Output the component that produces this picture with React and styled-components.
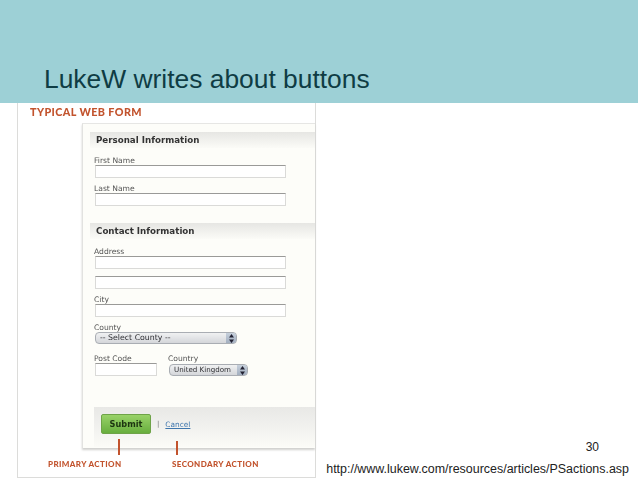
import styled, { createGlobalStyle } from "styled-components";

const GlobalStyle = createGlobalStyle`
  html, body {
    margin: 0;
    padding: 0;
    background: #fff;
  }
`;

function Field({ label, children }) {
  return (
    <div>
      <FieldLabel>{label}</FieldLabel>
      {children}
    </div>
  );
}

function Select({ width, top, textSize, children }) {
  return (
    <SelectBox $width={width} $top={top}>
      <SelectText $size={textSize}>{children}</SelectText>
      <SelectArrows>
        <svg width="5" height="9" viewBox="0 0 5 9">
          <path d="M2.5 0 L5 3.4 L0 3.4 Z M2.5 9 L5 5.6 L0 5.6 Z" fill="#223" />
        </svg>
      </SelectArrows>
    </SelectBox>
  );
}

function App() {
  return (
    <Slide>
      <GlobalStyle />
      <Banner>
        <Title>LukeW writes about buttons</Title>
      </Banner>
      <Body>
        <Figure>
          <FigureTitle>TYPICAL WEB FORM</FigureTitle>
          <Card>
            <SectionHead>Personal Information</SectionHead>
            <Fields $pad={6}>
              <Field label="First Name">
                <Input />
              </Field>
              <Field label="Last Name">
                <Input />
              </Field>
            </Fields>
            <SectionHead $top={17}>Contact Information</SectionHead>
            <Fields $pad={6}>
              <Field label="Address">
                <Input />
                <Input $top={7} />
              </Field>
              <Field label="City">
                <Input />
              </Field>
              <Field label="County">
                <Select width={142} textSize={7.8}>
                  -- Select County --
                </Select>
              </Field>
              <PostRow>
                <Field label="Post Code">
                  <Input $width={62} />
                </Field>
                <Field label="Country">
                  <Select width={79} top={1} textSize={7.1}>
                    United Kingdom
                  </Select>
                </Field>
              </PostRow>
            </Fields>
            <Actions>
              <Submit>Submit</Submit>
              <Divider>|</Divider>
              <Cancel>Cancel</Cancel>
            </Actions>
          </Card>
          <Pointer $left={100} $top={336} $height={16} />
          <Pointer $left={158} $top={338} $height={14} />
          <ActionLabels>
            <ActionLabel $width={124}>PRIMARY ACTION</ActionLabel>
            <ActionLabel>SECONDARY ACTION</ActionLabel>
          </ActionLabels>
        </Figure>
        <Notes>
          <PageNumber>30</PageNumber>
          <Url>http://www.lukew.com/resources/articles/PSactions.asp</Url>
        </Notes>
      </Body>
    </Slide>
  );
}

const Slide = styled.div`
  width: 638px;
  height: 479px;
  overflow: hidden;
  background: #fff;
`;

const Banner = styled.div`
  height: 103px;
  box-sizing: border-box;
  padding: 65px 0 0 44px;
  background: #9dd0d6;
`;

const Title = styled.div`
  font-family: "Liberation Sans", Arial, sans-serif;
  font-size: 26.4px;
  line-height: 28px;
  color: #0f3c44;
`;

const Body = styled.div`
  display: flex;
  height: 376px;
`;

const Figure = styled.div`
  position: relative;
  box-sizing: border-box;
  width: 299px;
  height: 375px;
  margin-left: 17px;
  border: 1px solid #dcdcda;
  border-top: none;
  background: #fff;
  filter: blur(0.35px);
`;

const FigureTitle = styled.div`
  height: 20px;
  padding-left: 12px;
  font-family: Lato, "Liberation Sans", sans-serif;
  font-size: 10.8px;
  font-weight: 900;
  line-height: 18px;
  letter-spacing: 0.4px;
  color: #c2532d;
`;

const Card = styled.div`
  box-sizing: border-box;
  height: 325px;
  margin-left: 64px;
  padding: 8px 0 0 7px;
  border-top: 1px solid #e6e6e4;
  border-left: 1px solid #e2e2e0;
  background: #fdfdf9;
  box-shadow: 0 2px 2px #d0d0ce;
`;

const SectionHead = styled.div`
  box-sizing: border-box;
  height: 16px;
  margin-top: ${(p) => p.$top || 0}px;
  padding-left: 6px;
  font-family: "DejaVu Sans", sans-serif;
  font-size: 8.7px;
  font-weight: 700;
  line-height: 16px;
  color: #333;
  background: linear-gradient(#e6e6e3, #fbfbf7);
`;

const Fields = styled.div`
  display: flex;
  flex-direction: column;
  gap: 4px;
  padding: ${(p) => p.$pad}px 0 0 4px;
`;

const FieldLabel = styled.div`
  height: 11px;
  font-family: "DejaVu Sans", sans-serif;
  font-size: 7.6px;
  line-height: 13px;
  color: #555;
`;

const Input = styled.div`
  box-sizing: border-box;
  width: ${(p) => p.$width || 191}px;
  height: 13px;
  margin-top: ${(p) => p.$top || 0}px;
  margin-left: 1px;
  border: 1px solid #dadad8;
  border-top-color: #9a9a98;
  background: #fff;
`;

const SelectBox = styled.div`
  box-sizing: border-box;
  display: flex;
  align-items: center;
  justify-content: space-between;
  width: ${(p) => p.$width}px;
  height: 12px;
  margin-top: ${(p) => p.$top || 0}px;
  margin-left: 1px;
  border: 1px solid #a9adb3;
  border-radius: 4px;
  background: linear-gradient(#f0f1f2, #d4d6da);
`;

const SelectText = styled.span`
  padding-left: 4px;
  font-family: "DejaVu Sans", sans-serif;
  font-size: ${(p) => p.$size}px;
  font-weight: 500;
  line-height: 10px;
  white-space: nowrap;
  color: #2e2e32;
`;

const SelectArrows = styled.span`
  display: flex;
  align-items: center;
  justify-content: center;
  align-self: stretch;
  width: 10px;
  border-radius: 0 3px 3px 0;
  background: linear-gradient(#c6d0dc, #a2aebf);
`;

const PostRow = styled.div`
  display: flex;
  gap: 11px;
  margin-top: 4px;
`;

const Actions = styled.div`
  display: flex;
  align-items: center;
  box-sizing: border-box;
  height: 40px;
  margin: 31px 0 0 4px;
  padding: 0 0 6px 7px;
  background: linear-gradient(#e8e8e6, #fbfbf7);
`;

const Submit = styled.div`
  box-sizing: border-box;
  width: 50px;
  height: 20px;
  border: 1px solid #6ea348;
  border-radius: 2px;
  font-family: "DejaVu Sans", sans-serif;
  font-size: 8.2px;
  font-weight: 700;
  line-height: 18px;
  text-align: center;
  color: #1c3410;
  background: linear-gradient(#98d268, #68ae3e);
`;

const Divider = styled.span`
  margin-left: 6px;
  font-family: "DejaVu Sans", sans-serif;
  font-size: 7px;
  color: #777;
`;

const Cancel = styled.span`
  margin-left: 6px;
  font-family: "DejaVu Sans", sans-serif;
  font-size: 7.4px;
  text-decoration: underline;
  color: #3f76ad;
`;

const Pointer = styled.div`
  position: absolute;
  left: ${(p) => p.$left}px;
  top: ${(p) => p.$top}px;
  width: 2px;
  height: ${(p) => p.$height}px;
  background: #c2532d;
`;

const ActionLabels = styled.div`
  display: flex;
  padding: 10px 0 0 30px;
`;

const ActionLabel = styled.div`
  width: ${(p) => (p.$width ? `${p.$width}px` : "auto")};
  font-family: Lato, "Liberation Sans", sans-serif;
  font-size: 8px;
  font-weight: 900;
  line-height: 12px;
  letter-spacing: 0.4px;
  white-space: nowrap;
  color: #c2532d;
`;

const Notes = styled.div`
  display: flex;
  flex-direction: column;
  flex: 1;
  align-items: flex-end;
  justify-content: flex-end;
  padding: 0 9px 3px 0;
  font-family: "Liberation Sans", Arial, sans-serif;
  color: #222;
`;

const PageNumber = styled.div`
  margin: 0 30px 8px 0;
  font-size: 12px;
  line-height: 14px;
`;

const Url = styled.div`
  font-size: 12.45px;
  line-height: 14px;
  white-space: nowrap;
`;

export default App;
